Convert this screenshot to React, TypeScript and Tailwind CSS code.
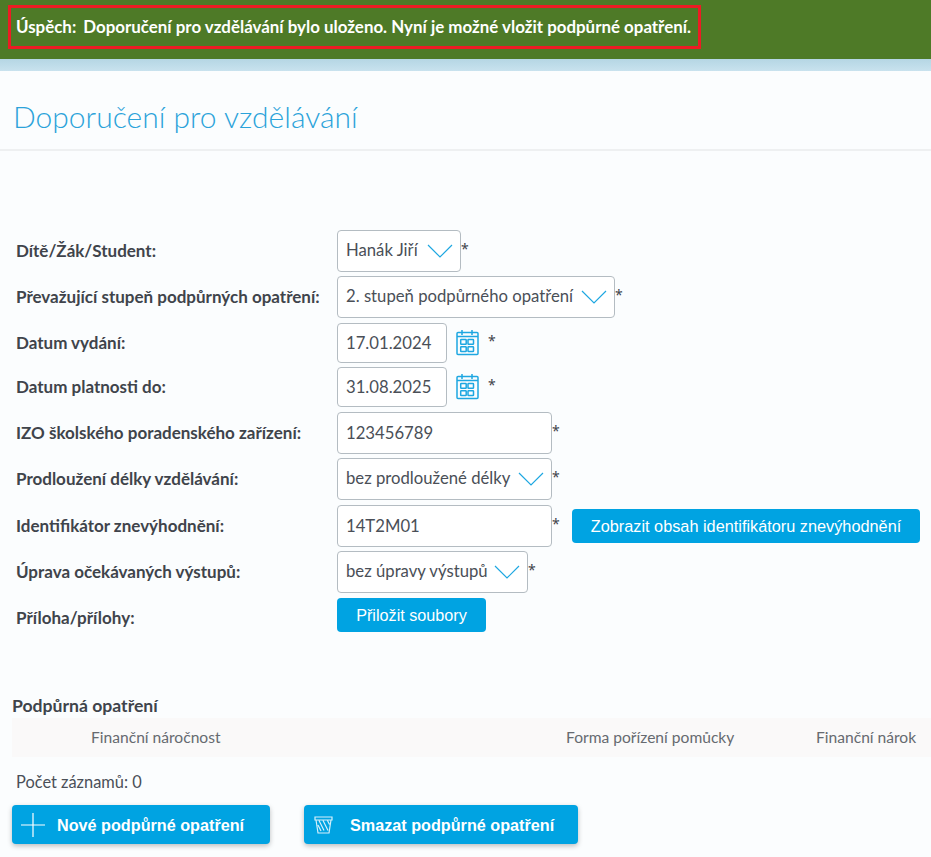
function Chevron() {
  return (
    <svg width="26" height="14" viewBox="0 0 26 14" fill="none" stroke="#1ea7e1" strokeWidth="1.2" className="shrink-0">
      <path d="M1 1l12 12L25 1" />
    </svg>
  );
}

function Calendar() {
  return (
    <svg width="23" height="26" viewBox="0 0 23 26" fill="none" stroke="#1ea7e1" strokeWidth="1.5" className="shrink-0">
      <rect x="1" y="2.500" width="21" height="22" rx="1" />
      <path d="M1 6.500h21M6 0v5M16 0v5" />
      <rect x="4.700" y="9.500" width="5.500" height="4.800" rx="0.6" />
      <rect x="12" y="9.500" width="5.500" height="4.800" rx="0.6" />
      <rect x="4.700" y="16.700" width="5.500" height="4.800" rx="0.6" />
      <rect x="12" y="16.700" width="5.500" height="4.800" rx="0.6" />
    </svg>
  );
}

function Row({ label, children, className, labelClass }: { label: string; children: React.ReactNode; className: string; labelClass?: string }) {
  return (
    <div className={`flex items-center ${className}`}>
      <div className={`-mt-px w-[321px] shrink-0 whitespace-nowrap text-[17px] font-bold text-[#3f444b] ${labelClass ?? ""}`}>{label}</div>
      {children}
    </div>
  );
}

function Select({ value, width }: { value: string; width: string }) {
  return (
    <div className={`flex h-[42px] items-center justify-between rounded-[4px] border border-[#b4bcc2] bg-white pl-2 pr-[7px] ${width}`}>
      <span className="whitespace-nowrap text-[16.7px] text-[#4a4f57]">{value}</span>
      <Chevron />
    </div>
  );
}

function TextBox({ value, width, height }: { value: string; width: string; height: string }) {
  return (
    <div className={`flex items-center rounded-[4px] border border-[#b4bcc2] bg-white pl-2 pt-px text-[16.7px] text-[#4a4f57] ${width} ${height}`}>
      {value}
    </div>
  );
}

function Star({ className }: { className?: string }) {
  return <span className={`-mt-[6px] w-[8px] font-['Noto_Sans',sans-serif] text-[14px] text-[#3f444b] ${className ?? ""}`}>*</span>;
}

function DateField({ value }: { value: string }) {
  return (
    <>
      <TextBox value={value} width="w-[110px]" height="h-[40px]" />
      <span className="ml-[9px]"><Calendar /></span>
      <Star className="ml-[9px]" />
    </>
  );
}

export default function App() {
  return (
    <div className="h-[857px] overflow-hidden bg-[#fbfdfe] font-['Lato','Noto_Sans',sans-serif]">
      <div className="h-[59px] bg-[#4e7a27] pl-[8px] pt-[5px]">
        <div className="flex h-[44px] w-[693px] items-center whitespace-nowrap border-[3px] border-[#ed1c24] pl-[5px] text-[16.9px] font-bold text-white">
          <span className="mr-[7px]">Úspěch:</span>
          Doporučení pro vzdělávání bylo uloženo. Nyní je možné vložit podpůrné opatření.
        </div>
      </div>
      <div className="h-[12px] bg-gradient-to-b from-[#b5d6e4] to-[#c8e2ee]" />
      <div className="flex h-[80px] items-center border-b-2 border-[#eef0f1] pl-[13px]">
        <h1 className="mt-[12px] text-[30px] font-light text-[#2ba3da]">Doporučení pro vzdělávání</h1>
      </div>

      <div className="pl-4 pr-[11px] pt-[79px]">
        <Row label="Dítě/Žák/Student:" className="mb-1">
          <Select value="Hanák Jiří" width="w-[124px]" />
          <Star />
        </Row>
        <Row label="Převažující stupeň podpůrných opatření:" className="mb-[5px]">
          <Select value="2. stupeň podpůrného opatření" width="w-[278px]" />
          <Star />
        </Row>
        <Row label="Datum vydání:" className="mb-1">
          <DateField value="17.01.2024" />
        </Row>
        <Row label="Datum platnosti do:" className="mb-[5px]">
          <DateField value="31.08.2025" />
        </Row>
        <Row label="IZO školského poradenského zařízení:" className="mb-1">
          <TextBox value="123456789" width="w-[215px]" height="h-[42px]" />
          <Star />
        </Row>
        <Row label="Prodloužení délky vzdělávání:" className="mb-[5px]">
          <Select value="bez prodloužené délky" width="w-[215px]" />
          <Star />
        </Row>
        <Row label="Identifikátor znevýhodnění:" className="mb-1">
          <TextBox value="14T2M01" width="w-[215px]" height="h-[42px]" />
          <Star />
          <button className="ml-[12px] h-[34px] w-[348px] rounded-[4px] bg-[#00a3e2] font-['Liberation_Sans',sans-serif] text-[16.3px] text-white">
            Zobrazit obsah identifikátoru znevýhodnění
          </button>
        </Row>
        <Row label="Úprava očekávaných výstupů:" className="mb-[5px]">
          <Select value="bez úpravy výstupů" width="w-[191px]" />
          <Star />
        </Row>
        <Row label="Příloha/přílohy:" className="" labelClass="mt-[6px]">
          <button className="h-[34px] w-[149px] rounded-[4px] bg-[#00a3e2] font-['Liberation_Sans',sans-serif] text-[16.2px] text-white">
            Přiložit soubory
          </button>
        </Row>
      </div>

      <div className="mt-[64px] pl-3">
        <h2 className="pb-[2px] text-[17.6px] font-bold leading-[20px] text-[#3f444b]">Podpůrná opatření</h2>
        <div className="grid h-[39px] grid-cols-[554px_250px_1fr] items-center bg-[#faf9f9] pt-px text-[15.6px] text-[#666a70]">
          <span className="pl-[79px]">Finanční náročnost</span>
          <span>Forma pořízení pomůcky</span>
          <span>Finanční nárok</span>
        </div>
        <p className="pl-1 pt-[15px] text-[16.4px] leading-[20px] text-[#4a4f57]">Počet záznamů: 0</p>
        <div className="mt-[13px] flex gap-[34px]">
          <button className="flex h-[39px] w-[258px] items-center rounded-[4px] bg-[#00a3e2] pl-[8px] pt-px font-['Liberation_Sans',sans-serif] text-[16.2px] font-bold text-white shadow-[0_2px_5px_rgba(0,0,0,0.25)]">
            <svg width="26" height="26" viewBox="0 0 26 26" stroke="#fff" strokeWidth="1.200" className="mr-[11px]">
              <path d="M13 1v24M1 13h24" />
            </svg>
            Nové podpůrné opatření
          </button>
          <button className="flex h-[39px] w-[274px] items-center rounded-[4px] bg-[#00a3e2] pl-[10px] pt-px font-['Liberation_Sans',sans-serif] text-[16.2px] font-bold text-white shadow-[0_2px_5px_rgba(0,0,0,0.25)]">
            <svg width="19" height="18" viewBox="0 0 19 18" fill="none" stroke="#d5f0fb" strokeWidth="1.200" className="mr-[17px]">
              <path d="M1 1h17v3H1zM2 4l2 13h11l2-13M5 4.500l5 10M9 4.500l5 10M13.500 4.500l2 4M4 9l3 6" />
            </svg>
            Smazat podpůrné opatření
          </button>
        </div>
      </div>
    </div>
  );
}
